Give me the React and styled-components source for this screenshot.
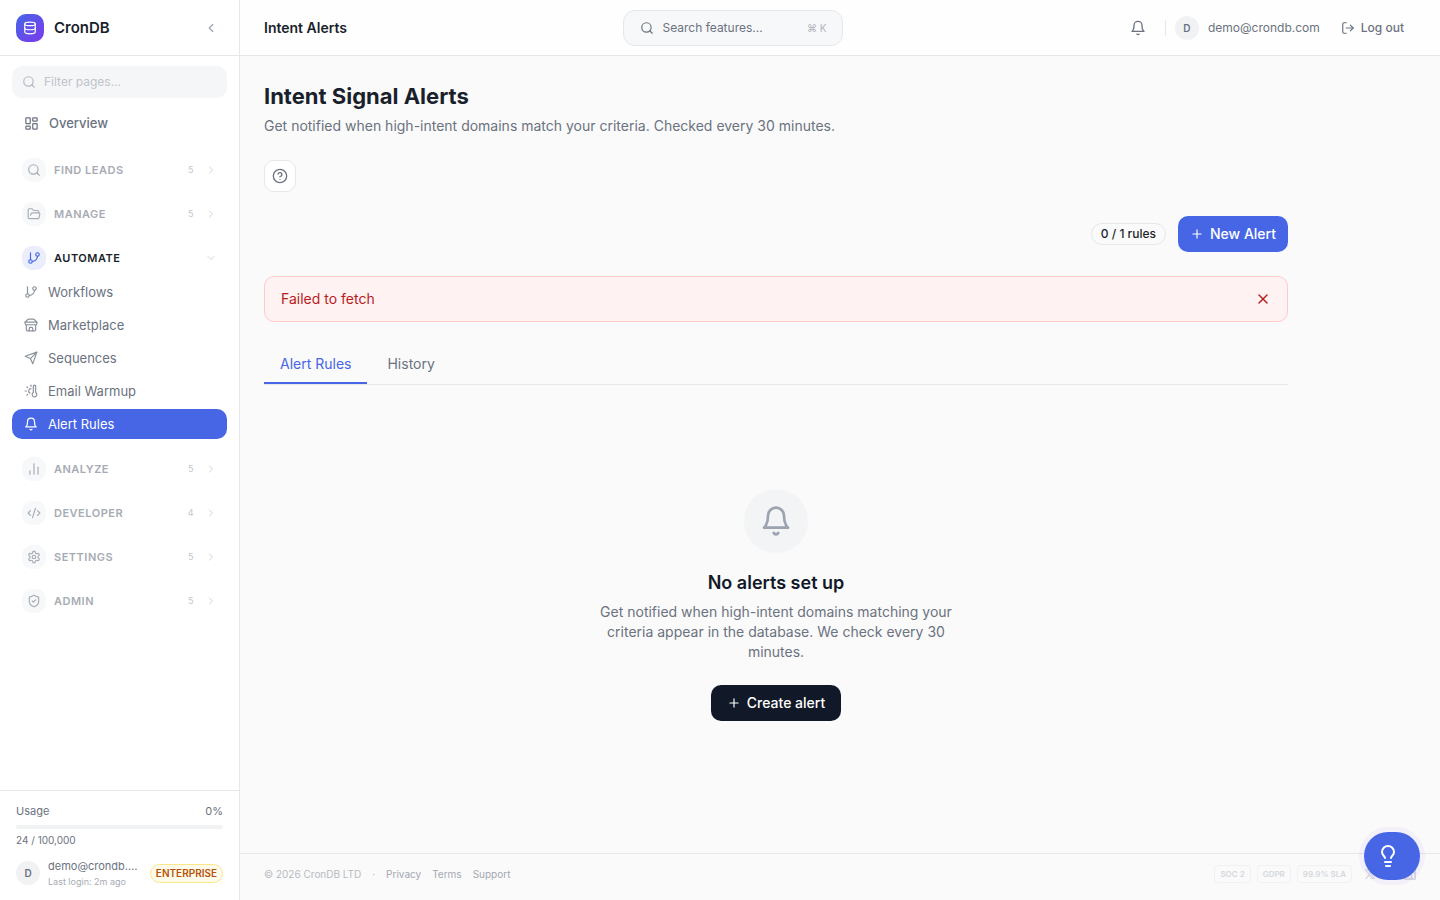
import React, { useState } from "react";
import styled, { createGlobalStyle, css } from "styled-components";
import {
  ChartNoAxesColumn,
  ChevronDown,
  ChevronLeft,
  ChevronRight,
  CircleQuestionMark,
  CodeXml,
  Database,
  FolderOpen,
  GitBranch,
  LayoutDashboard,
  LogOut,
  Plus,
  Search,
  ShieldCheck,
  ThermometerSun,
  X
} from "lucide-react";

const GlobalStyle = createGlobalStyle`
  *, *::before, *::after {
    box-sizing: border-box;
  }
  body {
    margin: 0;
    background: #fafafa;
    color: #1a1f2c;
    font-family: Inter, "Open Sans", sans-serif;
    font-size: 14px;
    line-height: 20px;
    -webkit-font-smoothing: antialiased;
  }
  button, input {
    font: inherit;
    color: inherit;
  }
  button {
    border: 0;
    padding: 0;
    background: none;
    cursor: pointer;
  }
  a {
    color: inherit;
    text-decoration: none;
  }
  h1, h2, p, ul {
    margin: 0;
    padding: 0;
  }
  svg {
    display: block;
    flex-shrink: 0;
  }
`;

const Glyph = ({ size = 14, strokeWidth = 1.5, children }) => (
  <svg
    width={size}
    height={size}
    viewBox="0 0 24 24"
    fill="none"
    stroke="currentColor"
    strokeWidth={strokeWidth}
    strokeLinecap="round"
    strokeLinejoin="round"
    aria-hidden="true"
  >
    {children}
  </svg>
);

const BellIcon = props => (
  <Glyph {...props}>
    <path d="M6 8a6 6 0 0 1 12 0c0 7 3 9 3 9H3s3-2 3-9" />
    <path d="M10.3 21a1.94 1.94 0 0 0 3.4 0" />
  </Glyph>
);

const SendIcon = props => (
  <Glyph {...props}>
    <path d="m22 2-7 20-4-9-9-4Z" />
    <path d="M22 2 11 13" />
  </Glyph>
);

const StoreIcon = props => (
  <Glyph {...props}>
    <path d="m2 7 4.41-4.41A2 2 0 0 1 7.83 2h8.34a2 2 0 0 1 1.42.59L22 7" />
    <path d="M4 12v8a2 2 0 0 0 2 2h12a2 2 0 0 0 2-2v-8" />
    <path d="M15 22v-4a2 2 0 0 0-2-2h-2a2 2 0 0 0-2 2v4" />
    <path d="M2 7h20" />
    <path d="M22 7v3a2 2 0 0 1-2 2a2.7 2.7 0 0 1-1.59-.63.7.7 0 0 0-.82 0A2.7 2.7 0 0 1 16 12a2.7 2.7 0 0 1-1.59-.63.7.7 0 0 0-.82 0A2.7 2.7 0 0 1 12 12a2.7 2.7 0 0 1-1.59-.63.7.7 0 0 0-.82 0A2.7 2.7 0 0 1 8 12a2.7 2.7 0 0 1-1.59-.63.7.7 0 0 0-.82 0A2.7 2.7 0 0 1 4 12a2 2 0 0 1-2-2V7" />
  </Glyph>
);

const GearIcon = props => (
  <Glyph {...props}>
    <path d="M12.22 2h-.44a2 2 0 0 0-2 2v.18a2 2 0 0 1-1 1.73l-.43.25a2 2 0 0 1-2 0l-.15-.08a2 2 0 0 0-2.73.73l-.22.38a2 2 0 0 0 .73 2.73l.15.1a2 2 0 0 1 1 1.72v.51a2 2 0 0 1-1 1.74l-.15.09a2 2 0 0 0-.73 2.73l.22.38a2 2 0 0 0 2.73.73l.15-.08a2 2 0 0 1 2 0l.43.25a2 2 0 0 1 1 1.73V20a2 2 0 0 0 2 2h.44a2 2 0 0 0 2-2v-.18a2 2 0 0 1 1-1.73l.43-.25a2 2 0 0 1 2 0l.15.08a2 2 0 0 0 2.73-.73l.22-.39a2 2 0 0 0-.73-2.73l-.15-.08a2 2 0 0 1-1-1.74v-.5a2 2 0 0 1 1-1.74l.15-.09a2 2 0 0 0 .73-2.73l-.22-.38a2 2 0 0 0-2.73-.73l-.15.08a2 2 0 0 1-2 0l-.43-.25a2 2 0 0 1-1-1.73V4a2 2 0 0 0-2-2z" />
    <circle cx="12" cy="12" r="3" />
  </Glyph>
);

const BulbIcon = props => (
  <Glyph {...props}>
    <path d="M15 14c.2-1 .7-1.7 1.5-2.5 1-.9 1.5-2.2 1.5-3.5A6 6 0 0 0 6 8c0 1 .2 2.2 1.5 3.5.7.7 1.3 1.5 1.5 2.5" />
    <path d="M9 18h6" />
    <path d="M10 22h4" />
  </Glyph>
);

const groups = [
  { name: "Find Leads", icon: Search, count: 5 },
  { name: "Manage", icon: FolderOpen, count: 5 },
  {
    name: "Automate",
    icon: GitBranch,
    pages: [
      { name: "Workflows", icon: GitBranch },
      { name: "Marketplace", icon: StoreIcon },
      { name: "Sequences", icon: SendIcon },
      { name: "Email Warmup", icon: ThermometerSun },
      { name: "Alert Rules", icon: BellIcon, active: true }
    ]
  },
  { name: "Analyze", icon: ChartNoAxesColumn, count: 5 },
  { name: "Developer", icon: CodeXml, count: 4 },
  { name: "Settings", icon: GearIcon, count: 5 },
  { name: "Admin", icon: ShieldCheck, count: 5 }
];

const Shell = styled.div`
  display: grid;
  grid-template-columns: 240px minmax(0, 1fr);
  min-height: 100vh;
`;

const Sidebar = styled.aside`
  display: flex;
  flex-direction: column;
  background: #fff;
  border-right: 1px solid #e5e7eb;
`;

const Brand = styled.div`
  display: flex;
  align-items: center;
  gap: 10px;
  height: 56px;
  padding: 0 16px;
  border-bottom: 1px solid #e5e7eb;
`;

const Logo = styled.span`
  display: grid;
  place-items: center;
  width: 28px;
  height: 28px;
  border-radius: 10px;
  color: #fff;
  background: linear-gradient(135deg, #4666e6, #7c3aed);
`;

const BrandName = styled.span`
  flex: 1;
  font-size: 15px;
  font-weight: 600;
`;

const CollapseButton = styled.button`
  display: grid;
  place-items: center;
  width: 24px;
  height: 24px;
  color: #9ca3af;
`;

const Nav = styled.nav`
  flex: 1;
  padding: 10px 12px;
`;

const FilterField = styled.label`
  display: flex;
  align-items: center;
  gap: 8px;
  height: 32px;
  margin-bottom: 8px;
  padding: 0 10px;
  border-radius: 10px;
  background: #f5f6f8;
  color: #b4b8c0;

  input {
    flex: 1;
    min-width: 0;
    padding: 0;
    border: 0;
    outline: 0;
    background: none;
    font-size: 12px;
  }
  input::placeholder {
    color: #c0c4cb;
    opacity: 1;
  }
`;

const NavLink = styled.a`
  display: flex;
  align-items: center;
  gap: 10px;
  height: 30px;
  padding: 0 12px;
  border-radius: 10px;
  font-size: 13px;
  color: #6b7280;

  svg {
    color: #8b919d;
  }

  ${p =>
    p.$top &&
    css`
      height: 34px;
      margin-bottom: 12px;
      font-weight: 500;

      svg {
        color: #6b7280;
      }
    `}

  ${p =>
    p.$active &&
    css`
      color: #fff;
      background: #4666e6;

      svg {
        color: #fff;
      }
    `}
`;

const Group = styled.section`
  margin-bottom: 8px;
`;

const GroupHeader = styled.button`
  display: flex;
  align-items: center;
  gap: 8px;
  width: 100%;
  height: 36px;
  padding: 0 10px;
  text-align: left;
  text-transform: uppercase;
  font-size: 11px;
  font-weight: 600;
  letter-spacing: 0.5px;
  color: ${p => (p.$open ? "#1a1f2c" : "#a7abb5")};
`;

const GroupIcon = styled.span`
  display: grid;
  place-items: center;
  width: 24px;
  height: 24px;
  border-radius: 10px;
  color: ${p => (p.$open ? "#4666e6" : "#a7abb5")};
  background: ${p => (p.$open ? "#eaeefc" : "#f7f8f9")};
`;

const GroupName = styled.span`
  flex: 1;
`;

const GroupCount = styled.span`
  margin-right: 3px;
  font-size: 9px;
  font-weight: 400;
  color: #c3c7ce;
`;

const Chevron = styled.span`
  color: #d1d5db;
`;

const PageList = styled.div`
  display: flex;
  flex-direction: column;
  gap: 3px;
  padding: 1px 0 4px;
`;

const SidebarFooter = styled.div`
  padding: 12px 16px 11px;
  border-top: 1px solid #e5e7eb;
  font-size: 11px;
  line-height: 16px;
  color: #6b7280;
`;

const UsageRow = styled.div`
  display: flex;
  justify-content: space-between;
`;

const UsageTrack = styled.div`
  height: 4px;
  margin: 6px 0 3px;
  border-radius: 2px;
  overflow: hidden;
  background: #f1f2f3;
`;

const UsageFill = styled.div`
  height: 100%;
  background: #4666e6;
`;

const UsageTotal = styled.p`
  font-size: 10px;
`;

const UserRow = styled.div`
  display: flex;
  align-items: center;
  gap: 8px;
  margin-top: 9px;
`;

const Avatar = styled.span`
  display: grid;
  place-items: center;
  flex-shrink: 0;
  width: 24px;
  height: 24px;
  border-radius: 50%;
  background: #f1f2f4;
  font-size: 10px;
  font-weight: 600;
  color: #6b7280;
`;

const UserMeta = styled.div`
  flex: 1;
  min-width: 0;
`;

const UserName = styled.p`
  overflow: hidden;
  white-space: nowrap;
  text-overflow: ellipsis;
  line-height: 18px;
`;

const LastLogin = styled.p`
  font-size: 9px;
  line-height: 14px;
  color: #a7abb5;
`;

const PlanBadge = styled.span`
  padding: 0 5px;
  border: 1px solid #fde68a;
  border-radius: 10px;
  background: #fffbeb;
  font-size: 10px;
  line-height: 17px;
  font-weight: 600;
  color: #b45309;
`;

const Column = styled.div`
  display: flex;
  flex-direction: column;
`;

const TopBar = styled.header`
  display: flex;
  align-items: center;
  justify-content: space-between;
  height: 56px;
  padding: 0 24px;
  border-bottom: 1px solid #e5e7eb;
  background: #fefefe;
`;

const PageName = styled.span`
  font-weight: 600;
`;

const SearchButton = styled.button`
  display: flex;
  align-items: center;
  gap: 8px;
  width: 220px;
  height: 36px;
  padding: 0 16px;
  border: 1px solid #e5e7eb;
  border-radius: 12px;
  background: #f7f8fa;
  font-size: 12px;
  text-align: left;
  color: #6b7280;

  span {
    flex: 1;
  }
  kbd {
    font-family: inherit;
    font-size: 10px;
    color: #b0b4bc;
  }
`;

const Account = styled.div`
  display: flex;
  align-items: center;
  gap: 9px;
  font-size: 12px;
  color: #6b7280;
`;

const BellButton = styled.button`
  display: grid;
  place-items: center;
  width: 36px;
  height: 36px;
`;

const Divider = styled.span`
  width: 1px;
  height: 16px;
  background: #e5e7eb;
`;

const LogoutButton = styled.button`
  display: flex;
  align-items: center;
  gap: 6px;
  height: 32px;
  padding: 0 12px;
  font-weight: 500;
`;

const Main = styled.main`
  flex: 1;
  display: flex;
  flex-direction: column;
  gap: 24px;
  width: 100%;
  max-width: 1072px;
  padding: 24px;
`;

const Heading = styled.div`
  h1 {
    font-size: 22px;
    line-height: 32px;
    font-weight: 700;
  }
  p {
    margin-top: 4px;
    color: #6b7280;
  }
`;

const HelpButton = styled.button`
  display: grid;
  place-items: center;
  width: 32px;
  height: 32px;
  border: 1px solid #e5e7eb;
  border-radius: 10px;
  background: #fff;
  color: #6b7280;
`;

const Actions = styled.div`
  display: flex;
  align-items: center;
  justify-content: flex-end;
  gap: 12px;
`;

const RuleCount = styled.span`
  padding: 0 9px;
  border: 1px solid #e5e7eb;
  border-radius: 11px;
  font-size: 12px;
  font-weight: 500;
`;

const SolidButton = styled.button`
  display: flex;
  align-items: center;
  gap: 6px;
  height: 36px;
  padding: 0 ${p => (p.$dark ? 16 : 12)}px;
  border-radius: 10px;
  font-weight: 500;
  color: #fff;
  background: ${p => (p.$dark ? "#111827" : "#4666e6")};
`;

const ErrorBanner = styled.div`
  display: flex;
  align-items: center;
  justify-content: space-between;
  height: 46px;
  padding: 0 16px;
  border: 1px solid #fecaca;
  border-radius: 10px;
  background: #fef2f2;
  color: #b91c1c;
`;

const Tabs = styled.div`
  display: flex;
  gap: 4px;
  border-bottom: 1px solid #e5e7eb;
`;

const Tab = styled.button`
  height: 38px;
  padding: 0 16px;
  border-bottom: 2px solid ${p => (p.$active ? "#4666e6" : "transparent")};
  color: ${p => (p.$active ? "#4666e6" : "#6b7280")};
`;

const EmptyState = styled.section`
  display: flex;
  flex-direction: column;
  align-items: center;
  padding: 80px 0;
  text-align: center;

  h2 {
    margin: 16px 0 5px;
    font-size: 18px;
    line-height: 28px;
    font-weight: 600;
    color: #111827;
  }
  p {
    max-width: 384px;
    margin-bottom: 23px;
    color: #6b7280;
  }
`;

const EmptyIcon = styled.span`
  display: grid;
  place-items: center;
  width: 64px;
  height: 64px;
  border-radius: 50%;
  background: #f3f4f6;
  color: #9ca3af;
`;

const Footer = styled.footer`
  display: flex;
  align-items: center;
  justify-content: space-between;
  height: 47px;
  padding: 0 24px 6px;
  border-top: 1px solid #e5e7eb;
  font-size: 10px;
  color: #b6bac2;
`;

const FooterLinks = styled.div`
  display: flex;
  gap: 11px;

  a {
    color: #a3a8b2;
  }
`;

const Marks = styled.div`
  display: flex;
  align-items: center;
  gap: 12px;
  color: #d5d8dd;
`;

const Seals = styled.div`
  display: flex;
  gap: 6px;
`;

const Seal = styled.span`
  padding: 0 5px;
  border: 1px solid #f0f1f3;
  border-radius: 4px;
  font-size: 8px;
  line-height: 16px;
  font-weight: 600;
`;

const Socials = styled.div`
  display: flex;
  gap: 8px;
`;

const TipsButton = styled.button`
  position: fixed;
  right: 20px;
  bottom: 20px;
  display: flex;
  align-items: center;
  width: 56px;
  height: 48px;
  padding: 0 12px;
  border-radius: 24px;
  color: #fff;
  background: #4666e6;
  box-shadow: 0 0 0 5px rgba(124, 58, 237, 0.05);
`;

const NavGroup = ({ group }) => {
  const [open, setOpen] = useState(Boolean(group.pages));
  const Icon = group.icon;

  return (
    <Group>
      <GroupHeader
        $open={open}
        aria-expanded={open}
        onClick={() => setOpen(!open)}
      >
        <GroupIcon $open={open}>
          <Icon size={14} strokeWidth={2} />
        </GroupIcon>
        <GroupName>{group.name}</GroupName>
        {group.count && <GroupCount>{group.count}</GroupCount>}
        <Chevron>
          {open ? <ChevronDown size={12} /> : <ChevronRight size={12} />}
        </Chevron>
      </GroupHeader>
      {open && group.pages && (
        <PageList>
          {group.pages.map(({ name, icon: PageIcon, active }) => (
            <NavLink key={name} href="#" $active={active}>
              <PageIcon size={14} strokeWidth={2} />
              {name}
            </NavLink>
          ))}
        </PageList>
      )}
    </Group>
  );
};

const SideNav = () => {
  const usage = 0;

  return (
    <Sidebar>
      <Brand>
        <Logo>
          <Database size={14} strokeWidth={2} />
        </Logo>
        <BrandName>CronDB</BrandName>
        <CollapseButton aria-label="Collapse sidebar">
          <ChevronLeft size={14} />
        </CollapseButton>
      </Brand>
      <Nav>
        <FilterField>
          <Search size={14} strokeWidth={2} />
          <input type="text" placeholder="Filter pages..." aria-label="Filter pages" />
        </FilterField>
        <NavLink href="#" $top>
          <LayoutDashboard size={15} strokeWidth={2} />
          Overview
        </NavLink>
        {groups.map(group => (
          <NavGroup key={group.name} group={group} />
        ))}
      </Nav>
      <SidebarFooter>
        <UsageRow>
          <span>Usage</span>
          <span>{usage}%</span>
        </UsageRow>
        <UsageTrack>
          <UsageFill style={{ width: `${usage}%` }} />
        </UsageTrack>
        <UsageTotal>24 / 100,000</UsageTotal>
        <UserRow>
          <Avatar>D</Avatar>
          <UserMeta>
            <UserName>demo@crondb.com</UserName>
            <LastLogin>Last login: 2m ago</LastLogin>
          </UserMeta>
          <PlanBadge>ENTERPRISE</PlanBadge>
        </UserRow>
      </SidebarFooter>
    </Sidebar>
  );
};

export default function App() {
  const [tab, setTab] = useState("Alert Rules");
  const [error, setError] = useState("Failed to fetch");

  return (
    <Shell>
      <GlobalStyle />
      <SideNav />
      <Column>
        <TopBar>
          <PageName>Intent Alerts</PageName>
          <SearchButton>
            <Search size={14} strokeWidth={2} />
            <span>Search features...</span>
            <kbd>⌘ K</kbd>
          </SearchButton>
          <Account>
            <BellButton aria-label="Notifications">
              <BellIcon size={16} strokeWidth={2} />
            </BellButton>
            <Divider />
            <Avatar>D</Avatar>
            <span>demo@crondb.com</span>
            <LogoutButton>
              <LogOut size={14} strokeWidth={2} />
              Log out
            </LogoutButton>
          </Account>
        </TopBar>
        <Main>
          <Heading>
            <h1>Intent Signal Alerts</h1>
            <p>
              Get notified when high-intent domains match your criteria. Checked
              every 30 minutes.
            </p>
          </Heading>
          <HelpButton aria-label="Help">
            <CircleQuestionMark size={16} strokeWidth={2} />
          </HelpButton>
          <Actions>
            <RuleCount>0 / 1 rules</RuleCount>
            <SolidButton>
              <Plus size={14} strokeWidth={2} />
              New Alert
            </SolidButton>
          </Actions>
          {error && (
            <ErrorBanner role="alert">
              {error}
              <button aria-label="Dismiss" onClick={() => setError(null)}>
                <X size={16} strokeWidth={2} />
              </button>
            </ErrorBanner>
          )}
          <Tabs role="tablist">
            {["Alert Rules", "History"].map(name => (
              <Tab
                key={name}
                role="tab"
                aria-selected={tab === name}
                $active={tab === name}
                onClick={() => setTab(name)}
              >
                {name}
              </Tab>
            ))}
          </Tabs>
          <EmptyState>
            <EmptyIcon>
              <BellIcon size={32} strokeWidth={2} />
            </EmptyIcon>
            <h2>No alerts set up</h2>
            <p>
              Get notified when high-intent domains matching your criteria
              appear in the database. We check every 30 minutes.
            </p>
            <SolidButton $dark>
              <Plus size={14} strokeWidth={2} />
              Create alert
            </SolidButton>
          </EmptyState>
        </Main>
        <Footer>
          <FooterLinks>
            <span>© 2026 CronDB LTD</span>
            <span>·</span>
            <a href="#">Privacy</a>
            <a href="#">Terms</a>
            <a href="#">Support</a>
          </FooterLinks>
          <Marks>
            <Seals>
              <Seal>SOC 2</Seal>
              <Seal>GDPR</Seal>
              <Seal>99.9% SLA</Seal>
            </Seals>
            <Socials>
              <a href="#" aria-label="X">
                <svg width="12" height="12" viewBox="0 0 24 24" fill="currentColor">
                  <path d="M18.24 2.25h3.31l-7.23 8.26 8.5 11.24h-6.66l-5.21-6.82-5.97 6.82H1.68l7.73-8.84L1.25 2.25h6.83l4.71 6.23zm-1.16 17.52h1.83L7.08 4.13H5.12z" />
                </svg>
              </a>
              <a href="#" aria-label="GitHub">
                <svg width="12" height="12" viewBox="0 0 24 24" fill="currentColor">
                  <path d="M12 .3a12 12 0 0 0-3.8 23.4c.6.1.8-.3.8-.6v-2c-3.3.7-4-1.6-4-1.6-.6-1.4-1.4-1.8-1.4-1.8-1-.7.1-.7.1-.7 1.2 0 1.9 1.2 1.9 1.2 1 1.8 2.8 1.3 3.5 1 0-.8.4-1.3.7-1.6-2.7-.3-5.5-1.3-5.5-6 0-1.2.5-2.3 1.3-3.1-.2-.4-.6-1.6 0-3.2 0 0 1-.3 3.4 1.2a11.5 11.5 0 0 1 6 0c2.3-1.5 3.3-1.2 3.3-1.2.7 1.6.2 2.8.1 3.2.8.8 1.3 1.9 1.3 3.200 0 4.600-2.800 5.600-5.500 5.900.5.4.9 1 .9 2.200v3.300c0 .3.1.7.8.6A12 12 0 0 0 12 .3" />
                </svg>
              </a>
              <a href="#" aria-label="LinkedIn">
                <svg width="12" height="12" viewBox="0 0 24 24" fill="currentColor">
                  <path d="M20.45 20.45h-3.56v-5.57c0-1.33-.02-3.04-1.85-3.04-1.85 0-2.14 1.45-2.14 2.94v5.67H9.35V9h3.41v1.56h.05c.48-.9 1.64-1.85 3.37-1.85 3.6 0 4.27 2.37 4.27 5.46zM5.34 7.43a2.06 2.06 0 1 1 0-4.12 2.06 2.06 0 0 1 0 4.12m1.78 13.02H3.56V9h3.56zM22.22 0H1.77C.79 0 0 .77 0 1.73v20.54C0 23.23.79 24 1.77 24h20.45c.98 0 1.78-.77 1.78-1.73V1.73C24 .77 23.2 0 22.22 0" />
                </svg>
              </a>
            </Socials>
          </Marks>
        </Footer>
      </Column>
      <TipsButton aria-label="Tips">
        <BulbIcon size={24} strokeWidth={2} />
      </TipsButton>
    </Shell>
  );
}
